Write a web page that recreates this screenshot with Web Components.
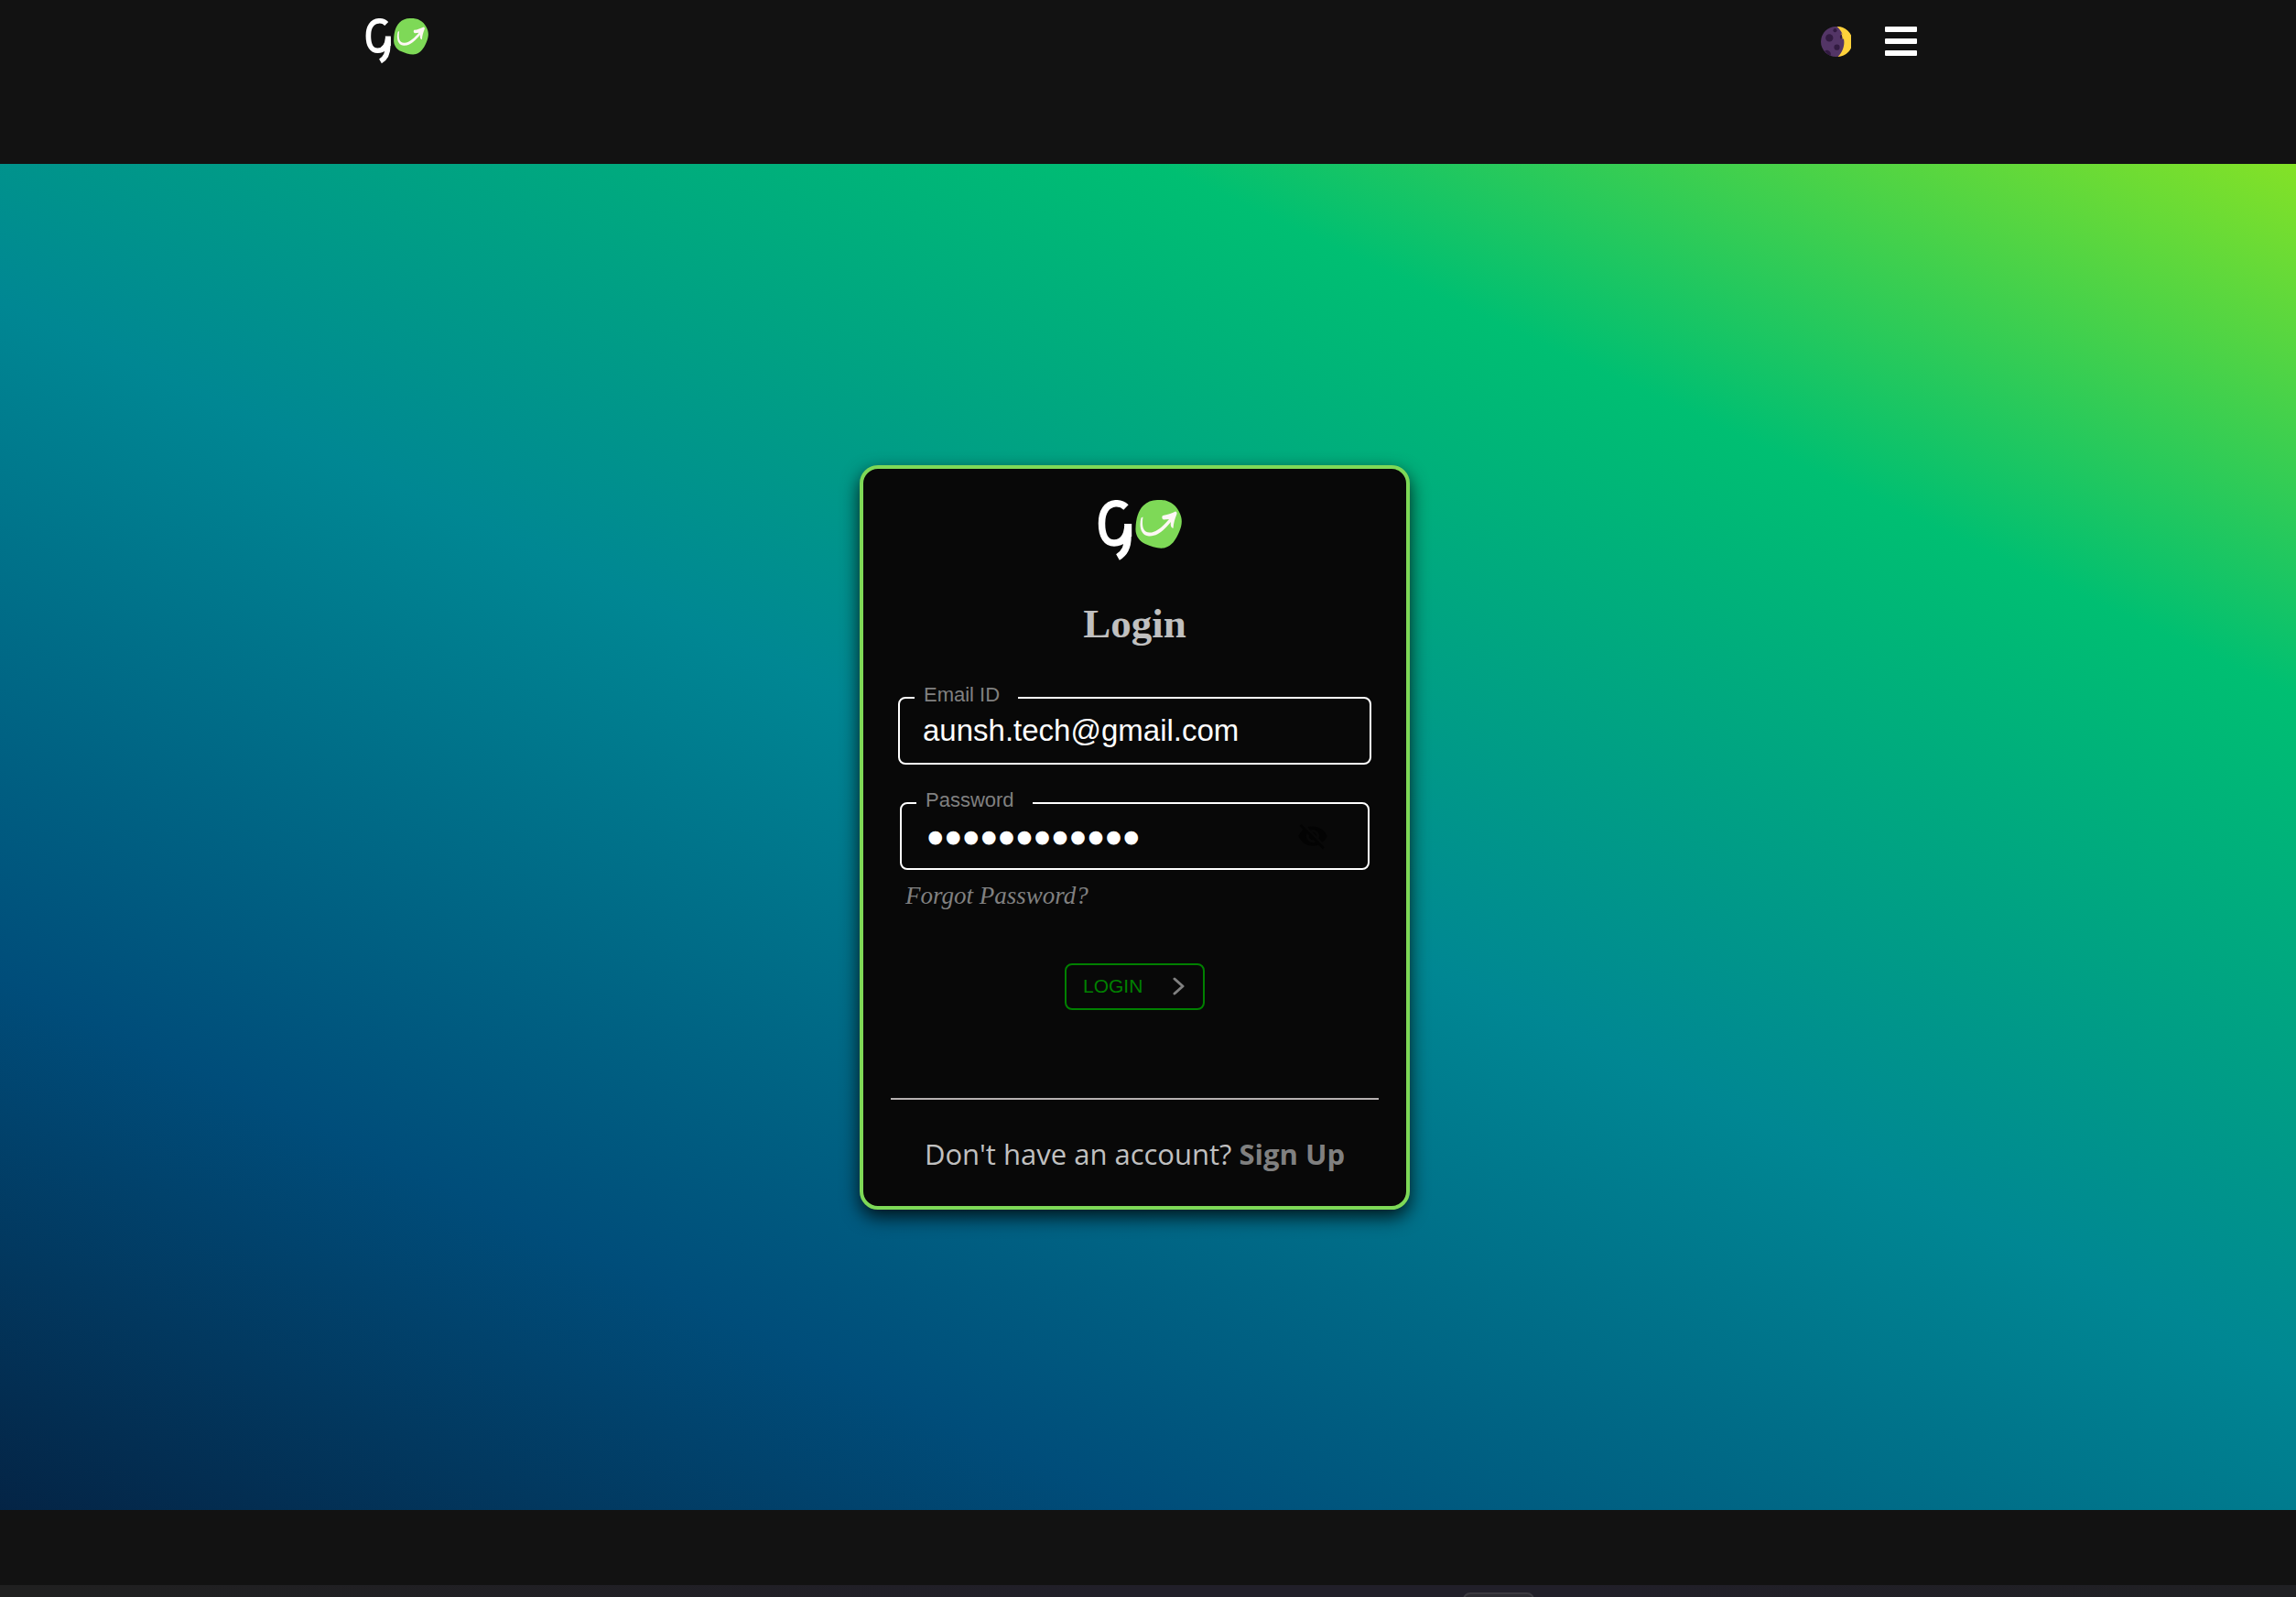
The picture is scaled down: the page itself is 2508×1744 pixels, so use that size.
<!DOCTYPE html>
<html lang="en">
<head>
<meta charset="utf-8">
<title>Go – Login</title>
<style>
  html, body { margin: 0; background: #121212; }
</style>
</head>
<body>
<go-page></go-page>
<script>
const define = (name, html, setup) => {
  const template = document.createElement('template');
  template.innerHTML = html;
  customElements.define(name, class extends HTMLElement {
    constructor() {
      super();
      this.attachShadow({ mode: 'open' }).append(template.content.cloneNode(true));
      if (setup) setup(this, this.shadowRoot);
    }
  });
};

/* Brand mark: white stroke and a green blob with an arrow */
define('go-logo', `
<style>
  :host { display: block; width: 92px; }
  svg { display: block; width: 100%; height: auto; }
</style>
<svg viewBox="0 0 92 66" role="img" aria-label="Go">
  <path d="M31 8C27 4 23 3.500 19.500 3.800 10 4.500 4.500 13 4.500 25.500 4.500 40 10 47 18 47c9 0 14-6 15-19v12c0 11-3 18-11 22.500" fill="none" stroke="#fff" stroke-width="7.500"/>
  <path d="M29 26h8.200v14h-6z" fill="#fff"/>
  <path d="M65 0C77-1 86 5 90 15c3 7 2 13-1 20-4 9-8 15-15 17-6 2-15-1-22-4-7-3-11-10-10.500-17C42 20 44 12 50 6c4-4 9-6 15-6z" fill="#7ed957"/>
  <path d="M49.500 18.500c-1.500 10 0 17 7 17C64 36 72 28 78 21l-6 .500c-2-1-2-3-1-4.500 5-.500 10-2.500 14-4.500 1.500.500 2 2 1 4-1.500 4-3 8-3.500 14.500-3-1-3-4-2.500-7C73 32 66 40 56 39.500c-9-.500-11-11-8.500-20z" fill="#fff7f5"/>
</svg>`);

define('go-header', `
<style>
  :host { display: block; height: 179px; background: #121212; }
  nav { display: flex; align-items: center; justify-content: space-between; height: 90px; margin: 0 16.500% 0 15.900%; }
  go-logo { width: 69px; }
  .tools { display: flex; align-items: center; gap: 37px; }
  button { display: block; border: 0; padding: 0; background: none; cursor: pointer; }
  svg { display: block; }
</style>
<nav>
  <go-logo></go-logo>
  <div class="tools">
    <button aria-label="Toggle theme">
      <svg width="33" height="33" viewBox="0 0 32 32">
        <circle cx="16" cy="16" r="16" fill="#533566"/>
        <path d="M17 0a16 16 0 0 1 1 32C27 23 27 9 17 0z" fill="#ffd23b"/>
        <path d="M22 7q-2 3 0 6h3q0-3-3-6z" fill="#ffd23b"/>
        <circle cx="9" cy="12" r="4" fill="#321b41"/>
        <circle cx="15" cy="4" r="2" fill="#321b41"/>
        <circle cx="17" cy="22" r="3" fill="#321b41"/>
        <path d="M4 26a4 4 0 0 1 6 5q-4-2-6-5zM22 8q-3 2-1 5h2z" fill="#321b41"/>
      </svg>
    </button>
    <button aria-label="Open menu">
      <svg width="35" height="32" viewBox="0 0 35 32" fill="#fff">
        <rect width="35" height="6" rx="1"/><rect y="13" width="35" height="6" rx="1"/><rect y="26" width="35" height="6" rx="1"/>
      </svg>
    </button>
  </div>
</nav>`);

/* Outlined input whose label sits in a notch of the border */
define('go-field', `
<style>
  :host { display: block; font-family: "Liberation Sans", Arial, sans-serif; }
  fieldset { display: flex; align-items: center; margin: 0; min-width: 0; height: 84px; box-sizing: border-box; padding: 0 43px 10px 25px; border: 2px solid #fff; border-radius: 8px; }
  legend { margin-left: -9px; padding: 0 20px 0 10px; height: 22px; color: #808080; }
  label { display: block; font-size: 22px; line-height: 16px; }
  input { flex: 1; min-width: 0; height: 50px; box-sizing: border-box; margin: 0; padding: 0; border: 0; outline: 0; background: none; color: #fff; font: 33px/40px "Liberation Sans", Arial, sans-serif; }
  input[type=password] { padding: 8px 0 0 2px; font-family: "DejaVu Sans", sans-serif; -webkit-text-stroke: 5px #fff; }
</style>
<fieldset>
  <legend><label for="control"></label></legend>
  <input id="control">
  <slot></slot>
</fieldset>`, (host, root) => {
  root.querySelector('label').textContent = host.getAttribute('label');
  const input = root.querySelector('input');
  input.type = host.getAttribute('type');
  input.setAttribute('value', host.getAttribute('value'));
});

define('go-login-card', `
<style>
  :host { display: block; width: 601px; box-sizing: border-box; padding: 34px 30px 0; border: 4px solid #7ed957; border-radius: 20px; background: #080808; box-shadow: 0 8px 20px rgba(0,0,0,.8); }
  go-logo { margin: 0 auto; }
  .brand { padding-left: 11px; }
  h1 { margin: 41px 0 0; text-align: center; color: #c0c0c0; font: bold 45px/56px "Liberation Serif", serif; }
  form { display: flex; flex-direction: column; padding: 0 8px; }
  .email { margin-top: 42px; }
  .password { margin: 31px 2px 0; }
  .eye { border: 0; padding: 0; background: none; }
  .eye svg { display: block; }
  .forgot { align-self: flex-start; margin: 12px 0 0 8px; color: #808080; font: italic 27px/32px "Liberation Serif", serif; text-decoration: none; }
  .submit { align-self: center; display: flex; align-items: center; justify-content: space-between; width: 153px; height: 51px; margin-top: 58px; padding: 0 20px 0 18px; border: 2px solid #008000; border-radius: 8px; background: none; color: #008000; font: 21px/24px "Liberation Sans", Arial, sans-serif; }
  hr { margin: 96px 0 0; border: 0; height: 2px; background: #b5b0b0; }
  p { margin: 37px 0 0; padding-bottom: 35px; text-align: center; white-space: nowrap; color: #c0c0c0; font: 31px/44px "Open Sans", sans-serif; }
  p a { color: #808080; font-weight: 700; text-decoration: none; }
</style>
<div class="brand"><go-logo></go-logo></div>
<h1>Login</h1>
<form>
  <go-field class="email" label="Email ID" type="email" value="aunsh.tech@gmail.com"></go-field>
  <go-field class="password" label="Password" type="password" value="aunshtech123">
    <button class="eye" type="button" aria-label="Show password">
      <svg width="34" height="34" viewBox="0 0 24 24" fill="#030303"><path d="M12 7a5 5 0 0 1 4.600 6.800l2.900 2.900A11.800 11.800 0 0 0 23 12C21.300 7.600 17 4.500 12 4.500c-1.400 0-2.700.200-4 .700l2.200 2.200A5 5 0 0 1 12 7zM2 4.300l2.700 2.700A11.800 11.800 0 0 0 1 12c1.700 4.400 6 7.500 11 7.500 1.600 0 3-.300 4.400-.800l3.300 3.300 1.300-1.300L3.300 3 2 4.300zm5.500 5.500 1.600 1.500a3 3 0 0 0 3.600 3.600l1.500 1.600A5 5 0 0 1 7.500 9.800zM11.800 9l3.200 3.200V12a3 3 0 0 0-3.200-3z"/></svg>
    </button>
  </go-field>
  <a class="forgot" href="#forgot">Forgot Password?</a>
  <button class="submit" type="button">LOGIN
    <svg width="13" height="20" viewBox="0 0 13 20" fill="none" stroke="#808080" stroke-width="3" stroke-linecap="round" stroke-linejoin="round"><path d="M2 2l9 8-9 8"/></svg>
  </button>
</form>
<hr>
<p>Don't have an account? <a href="#signup">Sign Up</a></p>`);

/* Desktop dock edge along the bottom of the window */
define('go-dock', `
<style>
  :host { display: flex; overflow: hidden; height: 13px; background: linear-gradient(90deg, #202020, #211f29 50%, #211f29 68%, #202023); }
  i { width: 78px; height: 20px; margin: 8px 0 0 63.700%; box-sizing: border-box; border: 2px solid #3c3a40; border-radius: 8px; background: #2c2b31; }
</style>
<i></i>`);

define('go-page', `
<style>
  :host { display: flex; flex-direction: column; height: 100vh; }
  main { flex: 1; display: flex; align-items: center; justify-content: center; box-sizing: border-box; padding-right: 29px; background: linear-gradient(25deg, #051937 -6%, #004d7a 22%, #008793 50%, #00bf72 78%, #a8eb12 106%); }
  .foot { height: 82px; background: #121212; }
</style>
<go-header></go-header>
<main><go-login-card></go-login-card></main>
<div class="foot"></div>
<go-dock></go-dock>`);
</script>
</body>
</html>
